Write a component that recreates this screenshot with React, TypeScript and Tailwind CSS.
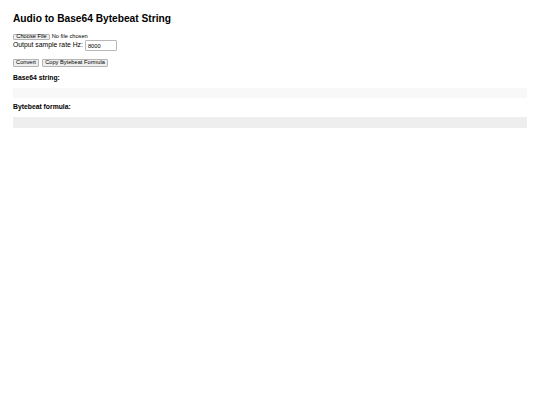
import React from "react";

export default function App() {
  return (
    <div className="min-h-[405px] w-full bg-white px-[13px] font-['Liberation_Sans',Arial,sans-serif] text-black">
      <div className="flex flex-col">
        <h2 className="mt-[13.1px] h-[11.7px] text-[10.2px] font-bold leading-[11.7px]">
          Audio to Base64 Bytebeat String
        </h2>

        <div className="mt-[8.9px] flex h-[6.8px] items-center">
          <button className="flex h-full w-[37px] items-center justify-center rounded-[1px] border border-[#b4b4b4] bg-[#efefef] text-[5.7px] leading-none">
            Choose File
          </button>
          <span className="ml-[1.7px] text-[5.7px] leading-none">No file chosen</span>
        </div>

        <div className="flex h-[10.2px] items-center">
          <span className="text-[6.8px] leading-none">Output sample rate Hz:</span>
          <input
            defaultValue="8000"
            className="ml-[2px] h-full w-[32px] rounded-[1px] border border-[#b8b8b8] bg-white px-[2px] text-[5.7px] leading-none outline-none"
          />
        </div>

        <div className="mt-[8.8px] flex h-[7.5px] items-center gap-[3px]">
          <button className="flex h-full w-[26px] items-center justify-center rounded-[1px] border border-[#b4b4b4] bg-[#efefef] text-[5.7px] leading-none">
            Convert
          </button>
          <button className="flex h-full w-[66px] items-center justify-center rounded-[1px] border border-[#b4b4b4] bg-[#efefef] text-[5.7px] leading-none">
            Copy Bytebeat Formula
          </button>
        </div>

        <div className="mt-[6.95px] h-[7.8px] text-[6.8px] font-bold leading-[7.8px]">Base64 string:</div>
        <div className="mt-[5.95px] h-[10.8px] w-full bg-[#f8f8f8]" />

        <div className="mt-[4.45px] h-[7.8px] text-[6.8px] font-bold leading-[7.8px]">Bytebeat formula:</div>
        <div className="mt-[5.95px] h-[11px] w-full bg-[#eeeeee]" />
      </div>
    </div>
  );
}
